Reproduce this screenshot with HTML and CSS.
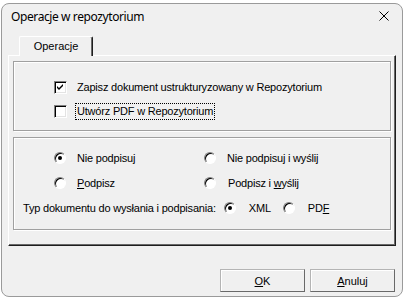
FILE: index.html
```html
<!DOCTYPE html>
<html lang="pl">
<head>
    <meta charset="UTF-8">
    <title>Operacje w repozytorium</title>
    <link rel="stylesheet" href="styles.css">
</head>
<body>
    <main class="window">
        <header class="titlebar">
            <span class="title">Operacje w repozytorium</span>
            <svg class="close" width="10" height="10" viewBox="0 0 10 10">
                <path d="M0.5 0.5 L9.5 9.5 M9.5 0.5 L0.5 9.5" stroke="#000" stroke-width="1" fill="none"/>
            </svg>
        </header>
        <div class="content">
            <div class="tabs">
                <div class="tab">Operacje</div>
            </div>
            <section class="page">
                <div class="group group-save">
                    <div class="row">
                        <span class="check checked">
                            <svg width="7" height="7" viewBox="0 0 7 7">
                                <path d="M0 2 L2 4 L6 0 L6 2 L2 6 L0 4 Z" fill="#000"/>
                            </svg>
                        </span>
                        <span class="label">Zapisz dokument ustrukturyzowany w Repozytorium</span>
                    </div>
                    <div class="row">
                        <span class="check"></span>
                        <span class="label focus">Utwórz PDF w Repozytorium</span>
                    </div>
                </div>
                <div class="group group-sign">
                    <div class="row">
                        <div class="cell">
                            <span class="radio checked"></span>
                            <span class="label">Nie podpisuj</span>
                        </div>
                        <div class="cell">
                            <span class="radio"></span>
                            <span class="label">Nie podpisuj i wyślij</span>
                        </div>
                    </div>
                    <div class="row">
                        <div class="cell">
                            <span class="radio"></span>
                            <span class="label"><u>P</u>odpisz</span>
                        </div>
                        <div class="cell">
                            <span class="radio"></span>
                            <span class="label shifted">Podpisz i <u>w</u>yślij</span>
                        </div>
                    </div>
                    <div class="row type-row">
                        <span class="label">Typ dokumentu do wysłania i podpisania:</span>
                        <span class="radio checked"></span>
                        <span class="label opt">XML</span>
                        <span class="radio"></span>
                        <span class="label opt">PD<u>F</u></span>
                    </div>
                </div>
            </section>
            <footer class="buttons">
                <button class="btn"><u>O</u>K</button>
                <button class="btn"><u>A</u>nuluj</button>
            </footer>
        </div>
    </main>
</body>
</html>
```

FILE: styles.css
```css
body {
    margin: 0;
    background: #ffffff;
    font-family: "Liberation Sans", Arial, sans-serif;
    font-size: 11px;
    color: #000;
}
.window {
    margin: 3px 0 0 1px;
    width: 402px;
    height: 294px;
    box-sizing: border-box;
    border: 1px solid #9a9a9a;
    border-radius: 8px;
    background: #f0f0f0;
    display: flex;
    flex-direction: column;
    overflow: hidden;
}
.titlebar {
    height: 25px;
    display: flex;
    align-items: center;
    justify-content: space-between;
    padding: 0 13px 0 9px;
}
.title {
    font-family: "Noto Sans", sans-serif;
    font-size: 12px;
    letter-spacing: -0.4px;
}
.close {
    margin-top: -2px;
}
.content {
    padding: 7px 6px 0 6px;
}
.tabs {
    display: flex;
    padding-left: 11px;
    height: 19px;
}
.tab {
    width: 74px;
    box-sizing: border-box;
    height: 20px;
    border-top: 1px solid #fff;
    border-left: 1px solid #fff;
    border-right: 1px solid #1e1e1e;
    border-radius: 2px 2px 0 0;
    box-shadow: inset -1px 0 0 #696969;
    background: #f0f0f0;
    text-align: center;
    line-height: 19px;
    position: relative;
    z-index: 1;
}
.page {
    height: 191px;
    box-sizing: border-box;
    border: 1px solid;
    border-color: #fff #1e1e1e #1e1e1e #fff;
    box-shadow: inset -1px -1px 0 #696969;
    padding: 5px 4px 0 4px;
    display: flex;
    flex-direction: column;
    gap: 6px;
}
.group {
    width: 378px;
    box-sizing: border-box;
    border: 1px solid #a0a0a0;
    box-shadow: inset 1px 1px 0 #fff, 1px 1px 0 #fff;
}
.group-save {
    height: 70px;
    padding: 19px 0 0 40px;
    display: flex;
    flex-direction: column;
    gap: 11px;
}
.group-sign {
    height: 93px;
    padding: 14px 0 0 40px;
    display: flex;
    flex-direction: column;
}
.row {
    display: flex;
    align-items: center;
    height: 13px;
}
.group-sign .row {
    height: 12px;
}
.group-sign .row + .row {
    margin-top: 13px;
}
.group-sign .type-row {
    margin-top: 17px;
    margin-left: -31px;
}
.cell {
    display: flex;
    align-items: center;
    width: 150px;
}
.check {
    width: 13px;
    height: 13px;
    box-sizing: border-box;
    background: #fff;
    border: 1px solid;
    border-color: #808080 #fff #fff #808080;
    box-shadow: inset 1px 1px 0 #000, inset -1px -1px 0 #e3e3e3;
    display: flex;
    align-items: center;
    justify-content: center;
    margin-right: 10px;
}
.radio {
    width: 12px;
    height: 12px;
    box-sizing: border-box;
    border-radius: 50%;
    background: #fff;
    border: 1px solid;
    border-color: #808080 #fff #fff #808080;
    box-shadow: inset 1px 1px 0 #000;
    display: flex;
    align-items: center;
    justify-content: center;
    margin-right: 11px;
}
.radio.checked::after {
    content: "";
    width: 4px;
    height: 4px;
    border-radius: 50%;
    background: #000;
}
.label {
    white-space: nowrap;
    line-height: 13px;
    letter-spacing: -0.2px;
}
.focus {
    outline: 1px dotted #000;
    outline-offset: 1px;
}
.shifted {
    padding-left: 1px;
}
.type-row .label:first-child {
    margin-right: 8px;
}
.type-row .radio {
    margin-right: 13px;
}
.type-row .opt {
    margin-right: 12px;
}
.buttons {
    display: flex;
    justify-content: flex-end;
    gap: 5px;
    margin-top: 23px;
    padding-right: 1px;
}
.btn {
    width: 85px;
    height: 23px;
    box-sizing: border-box;
    background: #f0f0f0;
    border: 1px solid;
    border-color: #b4b4b4 #696969 #696969 #b4b4b4;
    box-shadow: inset 1px 1px 0 #fff;
    font-family: "Liberation Sans", Arial, sans-serif;
    font-size: 11px;
    padding: 0;
}
```
